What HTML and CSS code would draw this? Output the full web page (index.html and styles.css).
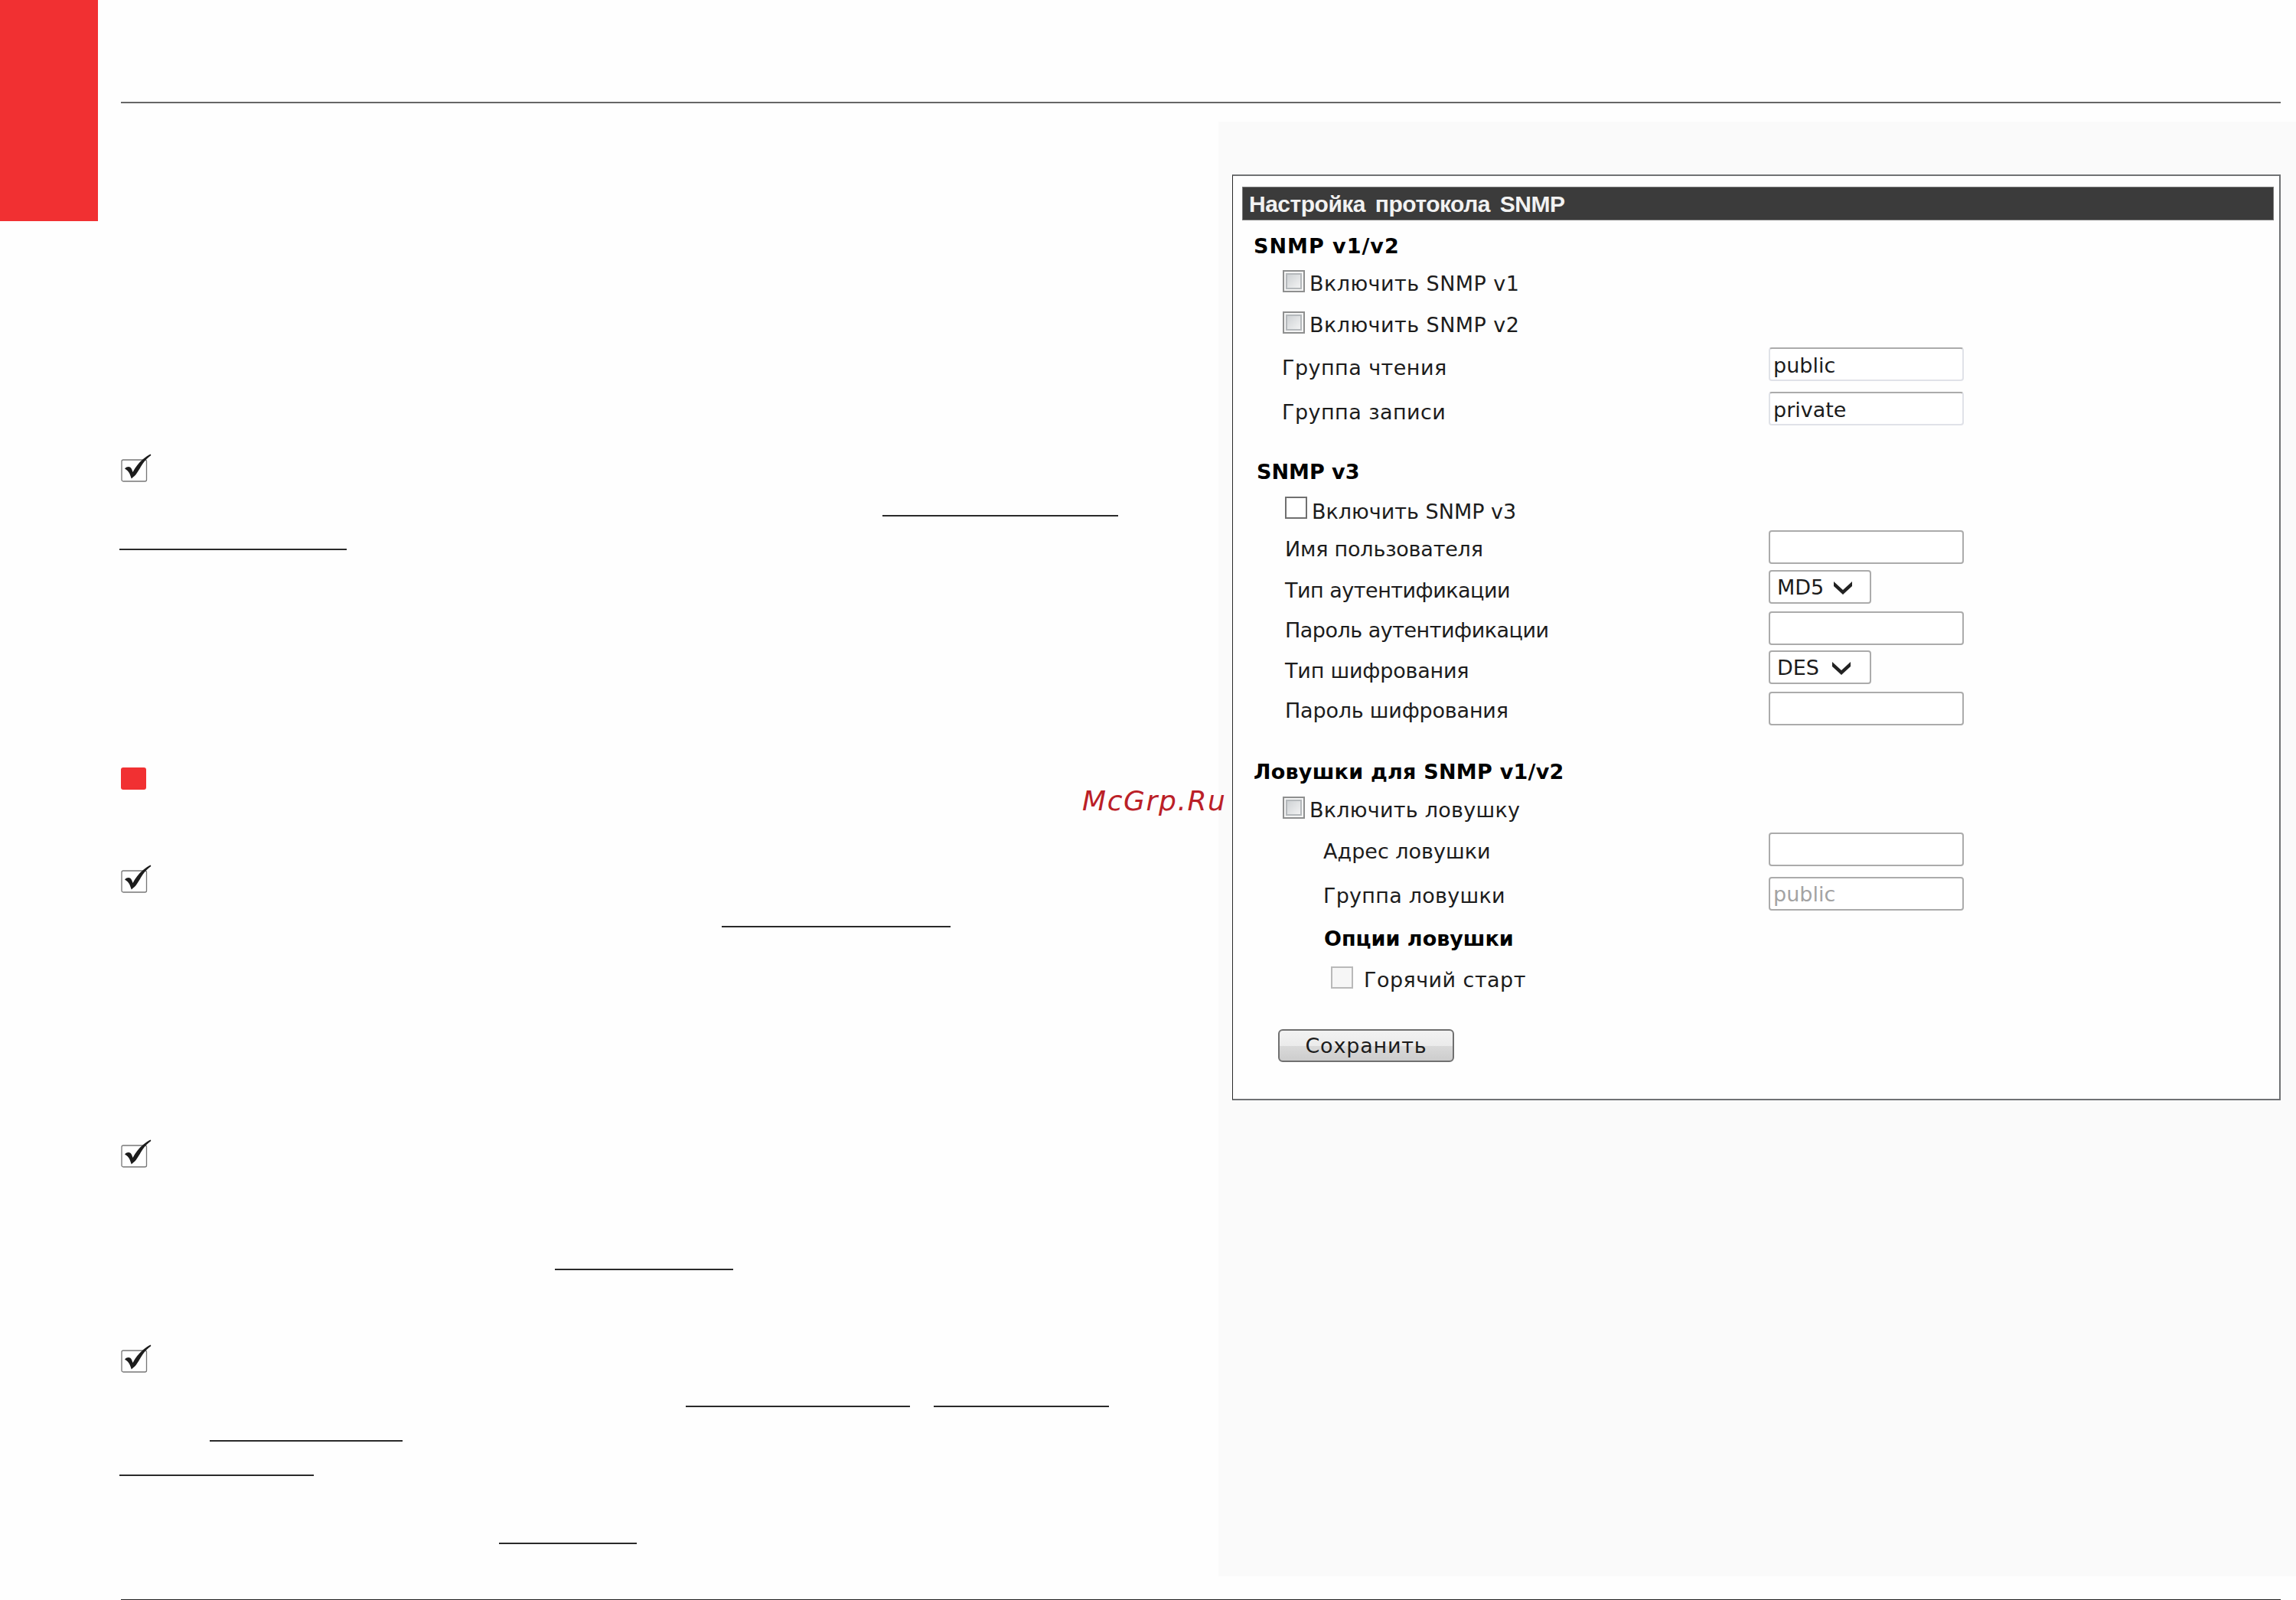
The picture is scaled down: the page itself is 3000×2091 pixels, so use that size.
FILE: index.html
```html
<!DOCTYPE html>
<html lang="ru">
<head>
  <meta charset="UTF-8">
  <title>SNMP</title>
  <link rel="stylesheet" href="styles.css">
</head>
<body>

<svg width="0" height="0" class="defs">
  <symbol id="tick" viewBox="0 0 40 37">
    <rect x="1" y="8" width="32.5" height="28" rx="2" fill="#fff" stroke="#777" stroke-width="1.3"/>
    <path d="M5 19.4C7.5 17 10 16.6 12 17.6C14 19 14.5 21.5 15.5 24C19 17.5 23 12 29 7C32.5 4 35.5 2 38.6 0.4L39.4 1.9C35.5 4.5 32 8 28.5 13C25.5 17.5 23.5 21.5 21 25C19 28.5 17 29.5 13.8 32.6C12.5 29 11.5 23 5 19.4Z"/>
  </symbol>
</svg>

<div class="tab"></div>

<div class="page">
  <div class="rule rule-top"></div>

  <div class="columns">
    <div class="notes">
      <svg class="tick row-11"><use href="#tick"/></svg>
      <div class="link link-a row-12"></div>
      <div class="link link-b row-13"></div>
      <div class="marker row-20"></div>
      <svg class="tick row-23"><use href="#tick"/></svg>
      <div class="link link-c row-24"></div>
      <svg class="tick row-31"><use href="#tick"/></svg>
      <div class="link link-d row-34"></div>
      <svg class="tick row-37"><use href="#tick"/></svg>
      <div class="link link-e row-38"></div>
      <div class="link link-f row-38"></div>
      <div class="link link-g row-39"></div>
      <div class="link link-h row-40"></div>
      <div class="link link-i row-42"></div>
    </div>

    <div class="panel">
      <form class="card">
        <h1>Настройка протокола SNMP</h1>

        <div class="section community">
          <h2 class="wider">SNMP v1/v2</h2>
          <label class="check wide"><i class="box"></i>Включить SNMP v1</label>
          <label class="check wide"><i class="box"></i>Включить SNMP v2</label>
          <div class="row"><div class="name wide">Группа чтения</div><input class="soft" type="text" value="public"></div>
          <div class="row"><div class="name wide">Группа записи</div><input class="soft" type="text" value="private"></div>
        </div>

        <div class="section v3">
          <h2>SNMP v3</h2>
          <label class="check"><i class="box flat"></i>Включить SNMP v3</label>
          <div class="row"><div class="name tight">Имя пользователя</div><input type="text"></div>
          <div class="row"><div class="name tighter">Тип аутентификации</div><div class="select">MD5<svg class="arrow" viewBox="0 0 26 17"><path d="M1 0L13 11L25 0V6L13 17L1 6Z"/></svg></div></div>
          <div class="row"><div class="name tighter">Пароль аутентификации</div><input type="text"></div>
          <div class="row"><div class="name tight">Тип шифрования</div><div class="select des">DES<svg class="arrow" viewBox="0 0 26 17"><path d="M1 0L13 11L25 0V6L13 17L1 6Z"/></svg></div></div>
          <div class="row"><div class="name tight">Пароль шифрования</div><input type="text"></div>
        </div>

        <div class="section trap">
          <h2 class="loose">Ловушки для SNMP v1/v2</h2>
          <label class="check loose"><i class="box"></i>Включить ловушку</label>
          <div class="row"><div class="name">Адрес ловушки</div><input type="text"></div>
          <div class="row"><div class="name loose">Группа ловушки</div><input type="text" value="public" disabled></div>
          <h3>Опции ловушки</h3>
          <label class="check sub wide"><i class="box off"></i>Горячий старт</label>
        </div>

        <button class="save" type="button">Сохранить</button>
      </form>
    </div>
  </div>

  <div class="rule rule-bottom"></div>
</div>

<div class="watermark">McGrp.Ru</div>

</body>
</html>
```
FILE: styles.css
```css
* {
  box-sizing: border-box;
}

body {
  display: flex;
  width: 3000px;
  height: 2091px;
  margin: 0;
  overflow: hidden;
  background: #fefefe;
  font-family: "DejaVu Sans", Verdana, sans-serif;
  font-size: 27px;
  color: #1c1c1c;
}

.defs {
  position: absolute;
}

.tab {
  width: 128px;
  height: 289px;
  background: #f13032;
}

.page {
  flex: 1;
  display: flex;
  flex-direction: column;
  padding-left: 30px;
}

.rule {
  height: 2px;
  margin-right: 20px;
  background: #666;
}

.rule-top {
  margin-top: 133px;
}

.rule-bottom {
  height: 1px;
  background: #222;
}

.columns {
  flex: 1;
  display: flex;
}

/* left column, one grid row per text line */
.notes {
  width: 1434px;
  display: grid;
  grid-template-columns: 100%;
  grid-template-rows: repeat(42, 44.8px);
  align-items: end;
  padding-top: 2px;
}

.row-11 { grid-area: 11 / 1; }
.row-12 { grid-area: 12 / 1; }
.row-13 { grid-area: 13 / 1; }
.row-20 { grid-area: 20 / 1; }
.row-23 { grid-area: 23 / 1; }
.row-24 { grid-area: 24 / 1; }
.row-31 { grid-area: 31 / 1; }
.row-34 { grid-area: 34 / 1; }
.row-37 { grid-area: 37 / 1; }
.row-38 { grid-area: 38 / 1; }
.row-39 { grid-area: 39 / 1; }
.row-40 { grid-area: 40 / 1; }
.row-42 { grid-area: 42 / 1; }

.link {
  height: 2px;
  background: #2a2a2a;
}

.link-a { margin-left: 995px; width: 308px; }
.link-b { margin-left: -2px; width: 297px; }
.link-c { margin-left: 785px; width: 299px; }
.link-d { margin-left: 567px; width: 233px; }
.link-e { margin-left: 738px; width: 293px; }
.link-f { margin-left: 1062px; width: 229px; }
.link-g { margin-left: 116px; width: 252px; }
.link-h { margin-left: -2px; width: 254px; }
.link-i { margin-left: 494px; width: 180px; }

.tick {
  width: 40px;
  height: 37px;
  fill: #1c1c1c;
}

.marker {
  width: 33px;
  height: 29px;
  margin-bottom: 1px;
  border-radius: 3px;
  background: #f13032;
}

.panel {
  flex: 1;
  height: 1901px;
  margin-top: 24px;
  padding: 69px 20px 0 18px;
  background: #fafafa;
}

.card {
  height: 1210px;
  padding: 14px 7px 0 12px;
  border: 2px solid #707274;
  border-left: 1px solid #2a2a2a;
  background: #fefefe;
}

h1 {
  height: 44px;
  margin: 0;
  padding-left: 8px;
  border: 1px solid #777;
  background: #3b3b3b;
  color: #f2f2f2;
  font: bold 30px/44px "Liberation Sans", Arial, sans-serif;
  letter-spacing: -0.5px;
  word-spacing: 5px;
}

.section {
  display: grid;
  align-items: start;
}

.community {
  margin-top: 11px;
  grid-template-rows: 49px 54px 56px 58px 78px;
}

.v3 {
  grid-template-rows: 52px 49px 54px 51.5px 53.5px 52px 80px;
}

.trap {
  grid-template-rows: 49.5px 54px 58px 56px 54px 87px;
}

h2, h3 {
  height: 44px;
  margin: 0;
  padding-left: 15px;
  font-size: 27px;
  line-height: 46px;
  color: #000;
}

h3 {
  padding-left: 107px;
}

.row, .check {
  display: flex;
  height: 44px;
  line-height: 46px;
}

.name {
  flex: 0 0 688px;
  padding-left: 52px;
}

.check {
  padding-left: 53px;
}

.v3 h2 { padding-left: 19px; }
.v3 .name { padding-left: 56px; }
.v3 .check { padding-left: 56px; }
.trap .name { padding-left: 106px; }
.trap .sub { padding-left: 116px; }

.tighter { letter-spacing: -0.5px; }
.tight { letter-spacing: -0.2px; }
.loose { letter-spacing: 0.25px; }
.wide { letter-spacing: 0.45px; }
.wider { letter-spacing: 1px; }

.box {
  width: 29px;
  height: 29px;
  margin: 5px 6px 0 0;
  border: 2px solid #8e8f8f;
  background: linear-gradient(135deg, #c6cacd, #fafafa);
  box-shadow: inset 0 0 0 2px #f4f4f4, inset 0 0 0 4px #b4b8bb;
}

.flat {
  margin-top: 3px;
  border-color: #707070;
  background: #fff;
  box-shadow: none;
}

.off {
  margin-right: 14px;
  border-color: #b9b9b9;
  background: #f6f6f6;
  box-shadow: none;
}

input, .select {
  width: 255px;
  height: 44px;
  margin-top: -2px;
  padding: 3px 4px 0;
  border: 2px solid #ababab;
  border-radius: 4px;
  background: #fff;
  font: inherit;
  color: #1c1c1c;
}

.soft {
  margin-top: -4px;
  border-color: #ababab #e0e2e8 #e0e2e8;
}

input:disabled {
  color: #a3a3a3;
}

.select {
  display: flex;
  align-items: center;
  width: 134px;
  margin-top: -4px;
  padding: 2px 9px 0;
}

.arrow {
  width: 26px;
  height: 17px;
  margin-left: 12px;
  fill: #222;
}

.des .arrow {
  margin-left: 16px;
}

.save {
  display: block;
  width: 230px;
  height: 43px;
  margin-left: 47px;
  padding: 0;
  border: 2px solid #707070;
  border-radius: 6px;
  background: linear-gradient(#f2f2f2, #ebebeb 50%, #dadada 50%, #cdcdcd);
  font: inherit;
  letter-spacing: 0.8px;
  color: #1c1c1c;
}

.watermark {
  position: absolute;
  left: 1414px;
  top: 1025px;
  font-size: 36px;
  font-style: italic;
  line-height: 44px;
  letter-spacing: 1.6px;
  color: #bb2027;
}
```
